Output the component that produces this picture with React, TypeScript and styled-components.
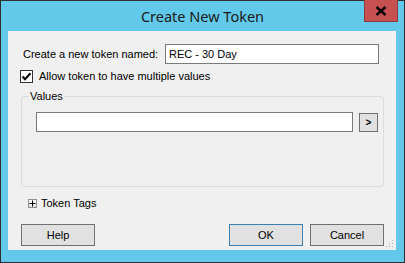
import React from 'react';
import styled, { createGlobalStyle } from 'styled-components';

const Global = createGlobalStyle`
  html, body {
    margin: 0;
    padding: 0;
    background: #f0f0f0;
  }
  * {
    box-sizing: border-box;
  }
`;

const App = () => {
  return (
    <>
      <Global />
      <Window>
        <TitleBar>
          <span />
          <Title>Create New Token</Title>
          <CloseButton aria-label="Close">
            <svg width="12" height="10" viewBox="0 0 12 10">
              <path d="M1.5 1 L10.5 9 M10.5 1 L1.5 9" stroke="#000" strokeWidth="2.4" />
            </svg>
          </CloseButton>
        </TitleBar>
        <Frame>
          <Client>
            <NameRow>
              <Label>Create a new token named:</Label>
              <TextBox defaultValue="REC - 30 Day" $width={214} />
            </NameRow>

            <CheckRow>
              <CheckBox>
                <svg width="11" height="11" viewBox="0 0 11 11">
                  <path d="M1.5 5.5 L4 8.2 L9.5 2.2" stroke="#000" strokeWidth="2" fill="none" />
                </svg>
              </CheckBox>
              <Label>Allow token to have multiple values</Label>
            </CheckRow>

            <Group>
              <Legend>Values</Legend>
              <ValueRow>
                <TextBox defaultValue="" $width={317} />
                <SmallButton>&gt;</SmallButton>
              </ValueRow>
            </Group>

            <TagsRow>
              <PlusBox>
                <svg width="7" height="7" viewBox="0 0 7 7">
                  <path d="M0.5 3.5 H6.5 M3.5 0.5 V6.5" stroke="#000" strokeWidth="1" />
                </svg>
              </PlusBox>
              <Label>Token Tags</Label>
            </TagsRow>

            <ButtonRow>
              <Button>Help</Button>
              <Spacer />
              <Button $primary>OK</Button>
              <Button>Cancel</Button>
            </ButtonRow>

            <Grip width="9" height="9" viewBox="0 0 9 9">
              <rect x="7" y="1" width="1" height="1" fill="#b4b4b4" />
              <rect x="4" y="4" width="1" height="1" fill="#b4b4b4" />
              <rect x="7" y="4" width="1" height="1" fill="#b4b4b4" />
              <rect x="1" y="7" width="1" height="1" fill="#b4b4b4" />
              <rect x="4" y="7" width="1" height="1" fill="#b4b4b4" />
              <rect x="7" y="7" width="1" height="1" fill="#b4b4b4" />
            </Grip>
          </Client>
        </Frame>
      </Window>
    </>
  );
};

export default App;

const Window = styled.div`
  width: 405px;
  height: 263px;
  border: 1px solid #2f2f2f;
  background: #63c9ea;
  display: flex;
  flex-direction: column;
  font-family: 'Liberation Sans', Arial, sans-serif;
  font-size: 11px;
  color: #000;
`;

const TitleBar = styled.div`
  height: 30px;
  display: grid;
  grid-template-columns: 1fr auto 1fr;
  align-items: start;
`;

const Title = styled.div`
  font-family: 'Noto Sans', 'Open Sans', sans-serif;
  font-size: 14.5px;
  line-height: 30px;
  color: #1a1a1a;
`;

const CloseButton = styled.div`
  justify-self: end;
  margin-right: 6px;
  margin-top: -1px;
  width: 34px;
  height: 22px;
  background: #c75050;
  border: 1px solid #8a3c3c;
  border-top: none;
  display: flex;
  align-items: center;
  justify-content: center;
`;

const Frame = styled.div`
  flex: 1;
  display: flex;
  padding: 0 8px 12px 7px;
`;

const Client = styled.div`
  position: relative;
  flex: 1;
  background: #f0f0f0;
  display: flex;
  flex-direction: column;
  padding: 13px 12px 0 13px;
`;

const Label = styled.span`
  white-space: nowrap;
  line-height: 13px;
`;

const NameRow = styled.div`
  display: flex;
  align-items: center;
  justify-content: space-between;
  height: 20px;
  padding-left: 2px;
  padding-right: 5px;
`;

const TextBox = styled.input<{ $width: number }>`
  width: ${(p) => p.$width}px;
  height: 20px;
  border: 1px solid #7a7a7a;
  background: #fff;
  font: inherit;
  padding: 0 3px;
  margin: 0;
  outline: none;
  color: #000;
`;

const CheckRow = styled.div`
  display: flex;
  align-items: center;
  gap: 6px;
  margin-top: 6px;
  margin-left: -1px;
  height: 13px;
`;

const CheckBox = styled.div`
  width: 13px;
  height: 13px;
  border: 1px solid #333;
  background: #fff;
  display: flex;
  align-items: center;
  justify-content: center;
`;

const Group = styled.fieldset`
  margin: 7px 0 0 0;
  padding: 9px 5px 0 14px;
  height: 97px;
  border: 1px solid #dcdcdc;
  border-radius: 3px;
  min-width: 0;
`;

const Legend = styled.legend`
  padding: 0 1px;
  margin-left: -7px;
  line-height: 13px;
`;

const ValueRow = styled.div`
  display: flex;
  align-items: center;
  gap: 6px;
`;

const SmallButton = styled.div`
  width: 19px;
  height: 19px;
  border: 1px solid #707070;
  background: #e1e1e1;
  display: flex;
  align-items: center;
  justify-content: center;
  font-size: 10px;
  font-weight: bold;
`;

const TagsRow = styled.div`
  display: flex;
  align-items: center;
  gap: 4px;
  margin-top: 10px;
  padding-left: 7px;
  height: 13px;
`;

const PlusBox = styled.div`
  width: 9px;
  height: 9px;
  border: 1px solid #919191;
  background: linear-gradient(#fdfdfd, #e2e2e2);
  display: flex;
  align-items: center;
  justify-content: center;
`;

const ButtonRow = styled.div`
  display: flex;
  gap: 7px;
  margin-top: 14px;
`;

const Spacer = styled.div`
  flex: 1;
`;

const Button = styled.div<{ $primary?: boolean }>`
  width: 74px;
  height: 22px;
  border: 1px solid ${(p) => (p.$primary ? '#3c7fb1' : '#707070')};
  background: #e1e1e1;
  display: flex;
  align-items: center;
  justify-content: center;
  line-height: 13px;
`;

const Grip = styled.svg`
  position: absolute;
  right: 2px;
  bottom: 2px;
`;
